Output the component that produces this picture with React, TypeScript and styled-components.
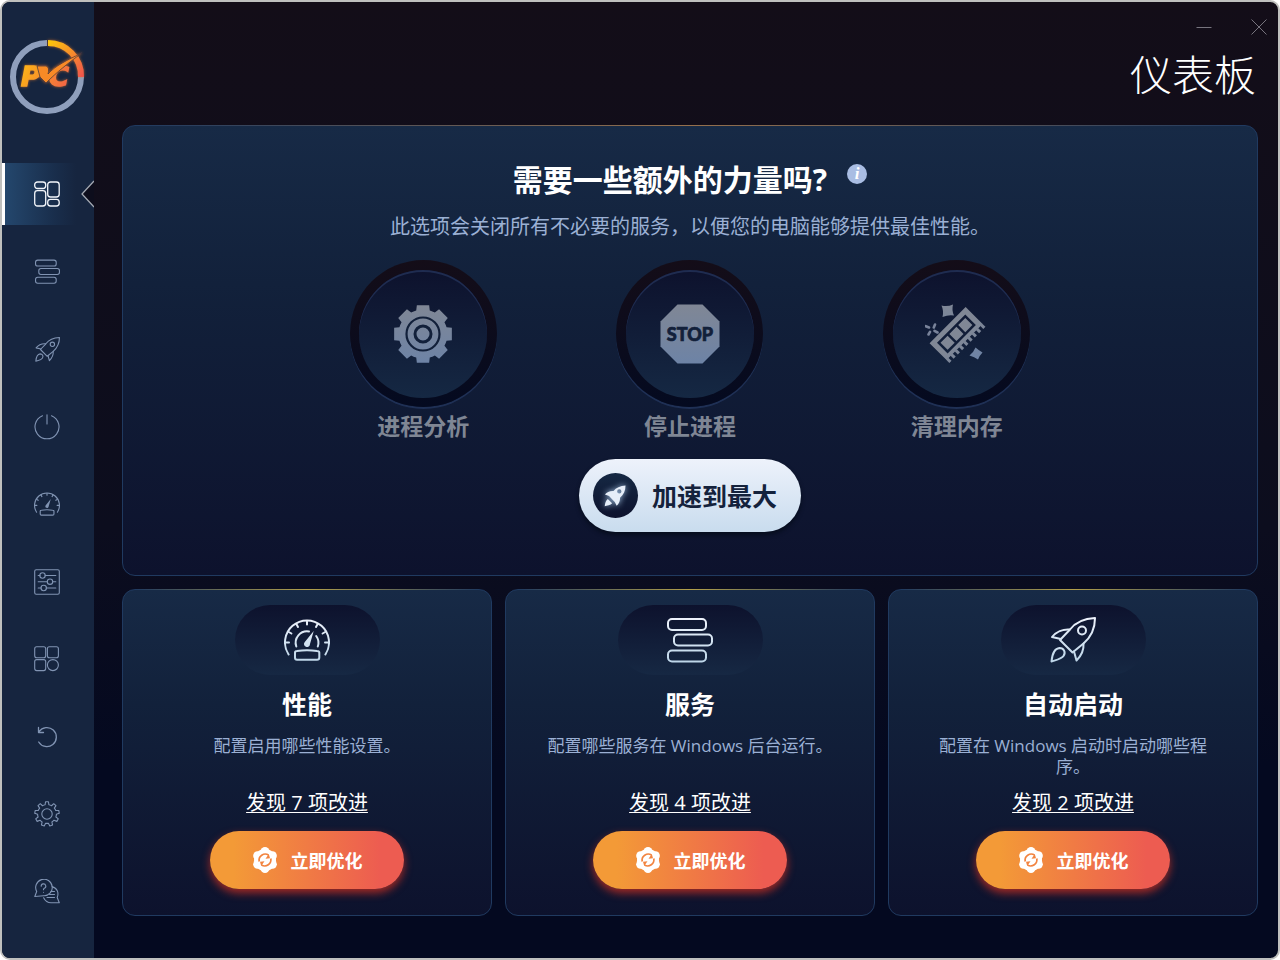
import React from "react";
import styled, { createGlobalStyle } from "styled-components";

const GlobalStyle = createGlobalStyle`
  *, *::before, *::after { box-sizing: border-box; }
  body {
    margin: 0;
    background: #ffffff;
    font-family: "Open Sans", "Noto Sans CJK SC", sans-serif;
    color: #ffffff;
  }
  button { font-family: inherit; cursor: pointer; }
  h1, h2, h3, p { margin: 0; }
`;

const Window = styled.div`
  display: flex;
  min-height: 100vh;
  border: 2px solid #bfc0be;
  border-radius: 10px;
  overflow: hidden;
  background: linear-gradient(#130d18, #0c0d1e 55%, #040920 80%, #040920);
`;

const Sidebar = styled.aside`
  display: flex;
  flex-direction: column;
  flex: 0 0 92px;
  background: #16253f;
`;

const LogoBox = styled.div`
  display: flex;
  justify-content: center;
  height: 161px;
  padding-top: 33px;
`;

const Nav = styled.nav`
  display: flex;
  flex: 1;
  flex-direction: column;
  justify-content: space-between;
  padding-bottom: 35px;
`;

const NavItem = styled.a<{ $active?: boolean }>`
  position: relative;
  display: flex;
  align-items: center;
  justify-content: center;
  height: 62px;
  padding-right: ${(p) => (p.$active ? "5px" : "2px")};
  color: ${(p) => (p.$active ? "#f2f6fb" : "#8194b3")};
  border-left: ${(p) => (p.$active ? "3px solid #ffffff" : "0")};
  background: ${(p) =>
    p.$active ? "linear-gradient(90deg, #24476d, #192e4c 55%, #16253f 80%)" : "none"};
`;

const ActiveArrow = styled.svg`
  position: absolute;
  top: 17px;
  right: 0;
`;

const Main = styled.main`
  flex: 1;
  min-width: 0;
  padding: 0 20px 42px 28px;
`;

const TitleBar = styled.div`
  display: flex;
  justify-content: flex-end;
  gap: 31px;
  height: 43px;
  padding-top: 13px;
  margin-right: -13px;
`;

const WindowButton = styled.button`
  display: flex;
  width: 24px;
  height: 24px;
  align-items: center;
  justify-content: center;
  padding: 0;
  border: 0;
  background: none;
  color: #77747e;
`;

const PageTitle = styled.h1`
  height: 80px;
  padding-right: 2px;
  font-size: 42px;
  font-weight: 300;
  line-height: 60px;
  text-align: right;
`;

const Panel = styled.section<{ $accent: string }>`
  position: relative;
  border: 1px solid #203a60;
  border-radius: 13px;
  background: linear-gradient(#172a46, #12213b 35%, #0d122d);
  &::before {
    content: "";
    position: absolute;
    top: -1px;
    left: 12px;
    right: 12px;
    height: 1px;
    background: linear-gradient(90deg, transparent, ${(p) => p.$accent} 50%, transparent);
  }
`;

const Hero = styled(Panel)`
  display: flex;
  flex-direction: column;
  align-items: center;
  padding: 34px 20px 43px;
`;

const HeroHeading = styled.div`
  display: flex;
  gap: 20px;
`;

const HeroTitle = styled.h2`
  font-size: 30px;
  font-weight: 700;
  line-height: 40px;
`;

const InfoButton = styled.button`
  width: 20px;
  height: 20px;
  margin-top: 4px;
  padding: 0;
  border: 0;
  border-radius: 50%;
  background: #a9bde3;
  color: #ffffff;
  font: italic 700 17px/20px "Liberation Serif", serif;
`;

const HeroText = styled.p`
  margin-top: 14px;
  font-size: 20px;
  line-height: 26px;
  color: #9bb0d4;
`;

const Steps = styled.ul`
  display: grid;
  grid-template-columns: repeat(3, 1fr);
  width: 100%;
  max-width: 800px;
  margin: 20px 0 18px;
  padding: 0;
  list-style: none;
`;

const Step = styled.li`
  display: flex;
  flex-direction: column;
  align-items: center;
  gap: 4px;
  font-size: 23px;
  font-weight: 700;
  line-height: 30px;
  color: #7f8694;
`;

const StepRing = styled.div`
  display: flex;
  align-items: center;
  justify-content: center;
  width: 147px;
  height: 147px;
  border-radius: 50%;
  background: linear-gradient(#140d18, #040a20);
  box-shadow: 0 2px 0 #1f3055;
`;

const StepDisc = styled.div`
  display: flex;
  align-items: center;
  justify-content: center;
  width: 128px;
  height: 128px;
  border-radius: 50%;
  background: linear-gradient(#0d122d, #152843);
  box-shadow: inset 0 2px 0 #1f2c50;
`;

const BoostButton = styled.button`
  display: flex;
  align-items: center;
  gap: 14px;
  height: 73px;
  padding: 0 24px 0 14px;
  border: 0;
  border-radius: 37px;
  background: linear-gradient(#edf2fb, #c9dcee);
  box-shadow: 0 3px 4px rgba(3, 10, 22, 0.7);
  color: #14223c;
  font-size: 25px;
  font-weight: 700;
  line-height: 36px;
`;

const BoostIcon = styled.span`
  display: flex;
  align-items: center;
  justify-content: center;
  width: 45px;
  height: 45px;
  border-radius: 50%;
  background: linear-gradient(#152843, #0d122d);
  svg { filter: drop-shadow(0 0 3px #a9c8e8); }
`;

const Cards = styled.div`
  display: grid;
  grid-template-columns: repeat(3, 1fr);
  gap: 13px;
  margin-top: 13px;
`;

const Card = styled(Panel)`
  display: flex;
  flex-direction: column;
  align-items: center;
  padding: 15px 37px 26px;
  text-align: center;
`;

const CardIcon = styled.div`
  display: flex;
  align-items: center;
  justify-content: center;
  width: 145px;
  height: 70px;
  border-radius: 35px;
  background: linear-gradient(#0d122d, #162843);
`;

const CardTitle = styled.h3`
  margin-top: 13px;
  font-size: 25px;
  font-weight: 700;
  line-height: 32px;
`;

const CardText = styled.p`
  min-height: 42px;
  margin-top: 15px;
  font-size: 17px;
  line-height: 21px;
  color: #9bb0d4;
`;

const FoundLink = styled.a`
  margin: 13px 0 15px;
  font-size: 20px;
  line-height: 26px;
  color: #ffffff;
  text-decoration: underline;
  text-decoration-thickness: 1px;
  text-underline-offset: 2px;
`;

const OptimizeButton = styled.button`
  display: flex;
  align-items: center;
  justify-content: center;
  gap: 13px;
  width: 194px;
  height: 58px;
  padding: 0;
  border: 0;
  border-radius: 29px;
  background: linear-gradient(90deg, #f39a37 12%, #ed5c51 88%);
  box-shadow: 0 4px 8px rgba(214, 50, 34, 0.75);
  color: #ffffff;
  font-size: 18px;
  font-weight: 700;
`;

/* Outline of a cog with flat teeth, centred in a square of side `size`. */
function gearPath(size: number, teeth: number, outer: number, inner: number, top: number, base: number) {
  const c = size / 2;
  const at = (r: number, a: number) =>
    `${(c + r * Math.sin(a)).toFixed(2)} ${(c - r * Math.cos(a)).toFixed(2)}`;
  const parts: string[] = [];
  for (let i = 0; i < teeth; i++) {
    const a = (i * 2 * Math.PI) / teeth;
    const next = ((i + 1) * 2 * Math.PI) / teeth;
    parts.push(
      `${i === 0 ? "M" : "L"}${at(inner, a - base)}L${at(outer, a - top)}L${at(outer, a + top)}L${at(inner, a + base)}`,
    );
    parts.push(`A${inner} ${inner} 0 0 1 ${at(inner, next - base)}`);
  }
  return parts.join("") + "Z";
}

type Glyph = { size: number; stroke?: string };

const line = (stroke: string, width: number) => ({
  fill: "none",
  stroke,
  strokeWidth: width,
  strokeLinecap: "round" as const,
  strokeLinejoin: "round" as const,
});

const StackIcon = ({ size, stroke = "currentColor" }: Glyph) => (
  <svg width={size} height={size} viewBox="0 0 46 46" {...line(stroke, 2)} aria-hidden="true">
    <rect x="1" y="2" width="38" height="11" rx="4" />
    <rect x="7" y="17.500" width="38" height="11" rx="4" />
    <rect x="1" y="33.500" width="38" height="11" rx="4" />
  </svg>
);

const RocketIcon = ({ size, stroke = "currentColor" }: Glyph) => (
  <svg width={size} height={size} viewBox="0 0 46 46" {...line(stroke, 2)} aria-hidden="true">
    <path d="M45 1C34 1.500 25 6 20 12.500L10 23L22.500 35.500L33.500 26.500C41 20 45 12 45 1Z" />
    <path d="M19.500 12.500C13 12 6 15 2 20L10.800 22" />
    <path d="M33.500 26.500C34 33 31 39 26.500 43.500L24 34.500" />
    <path d="M1.500 44.500C2 39 4 31.500 9.500 31C14 31 16 35.500 13.500 39C11.500 42 6 43 1.500 44.500Z" />
    <circle cx="32" cy="13.500" r="4" />
  </svg>
);

const ticks = [0, 30, 60, 90, 120, 150, 180];

const GaugeIcon = ({ size, stroke = "currentColor", detailed }: Glyph & { detailed?: boolean }) => (
  <svg width={size} height={size} viewBox="0 0 46 46" {...line(stroke, 2)} aria-hidden="true">
    <path d="M4.600 37.500A22 22 0 1 1 41.400 37.500" />
    {ticks.map((t) => {
      const a = (t * Math.PI) / 180;
      return (
        <path
          key={t}
          d={`M${23 - 21 * Math.cos(a)} ${25.5 - 21 * Math.sin(a)}L${23 - 18 * Math.cos(a)} ${25.5 - 18 * Math.sin(a)}`}
        />
      );
    })}
    {detailed && <path d="M12.300 29.500A11.500 11.500 0 0 1 25 14.400M32.200 19A11.500 11.500 0 0 1 33.800 29.500" />}
    <path
      d="M29.700 14L26 27A3 3 0 1 1 20.800 25Z"
      fill={stroke}
      stroke="none"
    />
    <path d="M11 35.500C11 34.500 12 34 13 34C19 33 27 33 33 34C34.500 34 35.300 34.500 35.300 35.500V40.500C35.300 42 34.500 42.700 33 42.700H13C11.500 42.700 11 42 11 40.500Z" />
  </svg>
);

const Small = ({ children }: { children: React.ReactNode }) => (
  <svg width="26" height="26" viewBox="0 0 26 26" {...line("currentColor", 1.1)} aria-hidden="true">
    {children}
  </svg>
);

const navItems: { label: string; icon: React.ReactNode }[] = [
  {
    label: "仪表板",
    icon: (
      <svg width="26" height="26" viewBox="0 0 26 26" {...line("currentColor", 1.3)} aria-hidden="true">
        <rect x="0.700" y="1" width="11" height="6.500" rx="2.800" />
        <rect x="13.700" y="1" width="11.500" height="15" rx="2.800" />
        <rect x="0.700" y="9.700" width="11" height="15.300" rx="2.800" />
        <rect x="13.700" y="18.300" width="11.500" height="6.700" rx="2.800" />
      </svg>
    ),
  },
  { label: "服务", icon: <StackIcon size={25} /> },
  { label: "自动启动", icon: <RocketIcon size={25} /> },
  {
    label: "电源",
    icon: (
      <Small>
        <path d="M8.500 1.700A12 12 0 1 0 17.500 1.700M13 0.700V10" />
      </Small>
    ),
  },
  { label: "性能", icon: <GaugeIcon size={26} /> },
  {
    label: "调整",
    icon: (
      <Small>
        <rect x="0.700" y="0.700" width="24.600" height="24.600" rx="1.500" />
        <path d="M4.200 6.500H6M11.200 6.500H21.800M4.200 12.700H13.300M18.800 12.700H21.800M4.200 19H7M12.400 19H21.800" />
        <circle cx="8.500" cy="6.500" r="2.700" />
        <circle cx="16" cy="12.700" r="2.700" />
        <circle cx="9.700" cy="19" r="2.700" />
      </Small>
    ),
  },
  {
    label: "应用",
    icon: (
      <Small>
        <rect x="0.700" y="0.700" width="11" height="11" rx="2" />
        <rect x="13.400" y="0.700" width="11" height="11" rx="2" />
        <rect x="0.700" y="13.600" width="11" height="11" rx="2" />
        <circle cx="18.900" cy="19.100" r="5.500" />
      </Small>
    ),
  },
  {
    label: "还原",
    icon: (
      <Small>
        <path d="M4.700 18A9.500 9.500 0 1 0 5 7.700M4.500 3.500V8.500H9.500" strokeWidth="1.300" />
      </Small>
    ),
  },
  {
    label: "设置",
    icon: (
      <Small>
        <path d={gearPath(26, 9, 12.3, 9.4, 0.12, 0.2)} />
        <circle cx="13" cy="13" r="5.200" />
      </Small>
    ),
  },
  {
    label: "帮助",
    icon: (
      <Small>
        <path d="M0.800 17.500L2.700 12.500A8.300 8.300 0 1 1 9.500 16.800Z" />
        <path d="M7.200 7.300A2.300 2.300 0 1 1 10.300 9.300C9.600 9.700 9.500 10.200 9.500 10.800M9.500 13.200V13.300" />
        <path d="M18 7.600C23.500 9 25 14 23.200 18.500L25.300 23.800H17C13.500 23.800 11 21.500 9.600 18.700" />
        <path d="M17 12.500H20.500M15.500 15.500H20.500M13 18.500H20.500" />
      </Small>
    ),
  },
];

const Logo = () => (
  <svg width="82" height="84" viewBox="0 0 82 84" role="img" aria-label="PC">
    <defs>
      <linearGradient id="logoArc" x1="0" y1="0" x2="1" y2="1">
        <stop offset="0" stopColor="#fdc50c" />
        <stop offset="1" stopColor="#f0564b" />
      </linearGradient>
      <linearGradient id="logoText" gradientUnits="userSpaceOnUse" x1="16" y1="30" x2="64" y2="56">
        <stop offset="0" stopColor="#fdb515" />
        <stop offset="1" stopColor="#f05a4d" />
      </linearGradient>
      <filter id="logoGlow" x="-30%" y="-30%" width="160%" height="160%">
        <feDropShadow dx="0" dy="0" stdDeviation="1.500" floodColor="#f07a2a" floodOpacity="0.700" />
      </filter>
    </defs>
    <circle cx="40" cy="42" r="34" fill="none" stroke="#8f9fbc" strokeWidth="6" />
    <path d="M40 8A34 34 0 0 1 74 42" fill="none" stroke="#16253f" strokeWidth="7" />
    <path d="M41 8A33 33 0 0 1 74 42" fill="none" stroke="url(#logoArc)" strokeWidth="6" filter="url(#logoGlow)" />
    <g filter="url(#logoGlow)">
      <text
        x="14 42"
        y="51"
        fontFamily="DejaVu Sans, sans-serif"
        fontSize="27"
        fontWeight="700"
        fontStyle="italic"
        fill="url(#logoText)"
        stroke="url(#logoText)"
        strokeWidth="1.500"
      >
        PC
      </text>
      <path d="M30 31H39C42 32 42 35 41 39C48 31 60 25 75 18C60 29 50 37 39 48L33 42Z" fill="#f88a26" stroke="#16253f" strokeWidth="0.600" />
    </g>
  </svg>
);

const StepGear = () => (
  <svg width="60" height="60" viewBox="0 0 60 60" aria-hidden="true">
    <path d={gearPath(60, 8, 29.5, 24.5, 0.21, 0.28)} fill="url(#mutedFill)" />
    <circle cx="30" cy="30" r="16.500" fill="none" stroke="#12203a" strokeWidth="2.200" />
    <circle cx="30" cy="30" r="8" fill="none" stroke="#12203a" strokeWidth="3" />
  </svg>
);

const StepStop = () => (
  <svg width="60" height="60" viewBox="0 0 60 60" aria-hidden="true">
    <path d="M17.500 0.500H42.500L59.500 17.500V42.500L42.500 59.500H17.500L0.500 42.500V17.500Z" fill="url(#mutedFill)" />
    <text
      x="30"
      y="37"
      textAnchor="middle"
      fontFamily="Lato, sans-serif"
      fontSize="18"
      fontWeight="900"
      fill="#12203a"
      stroke="#12203a"
      strokeWidth="0.700"
    >
      STOP
    </text>
  </svg>
);

const StepMemory = () => (
  <svg width="64" height="64" viewBox="0 0 64 64" aria-hidden="true">
    <g fill="url(#mutedFill)">
      <g transform="translate(32.5 33) rotate(-45)">
        <path
          fillRule="evenodd"
          d="M-25.500 -14H25.500V10H-25.500ZM-20 -9V6H20V-9Z"
        />
        <path d="M-17.500 -6.500H-7.500V3.500H-17.500ZM-5 -6.500H5V3.500H-5ZM7.500 -6.500H17.500V3.500H7.500Z" />
        {[-25.5, -19.5, -13.5, -7.5, -1.5, 4.5, 10.5, 16.5, 22.5].map((x) => (
          <rect key={x} x={x} y="9.500" width="3" height="4.500" />
        ))}
      </g>
      <path d="M16.500 3.500Q22.500 5 28 2.500Q26.500 8.500 29 13.500Q23.500 12.500 17.500 15Q19 9 16.500 3.500Z" />
      <path d="M50.500 45.500Q54 48.500 57.500 50.500Q54.500 53.500 53 57.500Q49.500 55 44.500 53.500Q48.500 50.500 50.500 45.500Z" />
    </g>
    <path
      d="M0.800 24.200L4 25.500M10 22.500L8.800 25.500M3.500 32.500L5 29.800M9.500 28.800L12.500 30.500"
      fill="none"
      stroke="#79839a"
      strokeWidth="2.600"
      strokeLinecap="round"
    />
  </svg>
);

const BoostRocket = () => (
  <svg width="22" height="22" viewBox="0 0 46 46" fill="#e6eef9" aria-hidden="true">
    <path
      fillRule="evenodd"
      d="M45 1C34 1.500 25 6 20 12.500C12 12 6 15 2 20L10.500 23L22.500 35.500L26.500 43.500C31 39 34 33 33.500 26.500C41 20 45 12 45 1ZM32 9A4.500 4.500 0 1 0 32 18A4.500 4.500 0 1 0 32 9Z"
    />
    <path d="M1.500 44.500C2 39 4 31.500 8 29.500L17 38C14 42 6 43 1.500 44.500Z" />
  </svg>
);

const petals = [0, 60, 120, 180, 240, 300];

const OptimizeIcon = () => (
  <svg width="26" height="26" viewBox="0 0 26 26" aria-hidden="true">
    <circle cx="13" cy="13" r="11" fill="#ffffff" />
    {petals.map((p) => {
      const a = (p * Math.PI) / 180;
      return <circle key={p} cx={13 + 8.6 * Math.sin(a)} cy={13 - 8.6 * Math.cos(a)} r="4.400" fill="#ffffff" />;
    })}
    <g fill="none" stroke="#f28440" strokeWidth="1.700">
      <path d="M7.200 14.500A6.200 6.200 0 0 1 16.500 8" />
      <path d="M18.800 11.500A6.200 6.200 0 0 1 9.500 18" />
    </g>
    <path d="M13.500 11.800L18 11.200L16.800 7ZM12.500 14.200L8 14.800L9.200 19Z" fill="#f28440" />
  </svg>
);

const SharedDefs = () => (
  <svg width="0" height="0" style={{ position: "absolute" }} aria-hidden="true">
    <defs>
      <linearGradient id="mutedFill" gradientUnits="userSpaceOnUse" x1="0" y1="0" x2="0" y2="60">
        <stop offset="0" stopColor="#808795" />
        <stop offset="1" stopColor="#6d83a6" />
      </linearGradient>
      <linearGradient id="paleStroke" gradientUnits="userSpaceOnUse" x1="0" y1="0" x2="0" y2="46">
        <stop offset="0" stopColor="#eff3fc" />
        <stop offset="1" stopColor="#bcd5e8" />
      </linearGradient>
    </defs>
  </svg>
);

const steps = [
  { label: "进程分析", icon: <StepGear /> },
  { label: "停止进程", icon: <StepStop /> },
  { label: "清理内存", icon: <StepMemory /> },
];

const cards = [
  {
    title: "性能",
    text: "配置启用哪些性能设置。",
    found: "发现 7 项改进",
    icon: <GaugeIcon size={46} stroke="url(#paleStroke)" detailed />,
  },
  {
    title: "服务",
    text: "配置哪些服务在 Windows 后台运行。",
    found: "发现 4 项改进",
    icon: <StackIcon size={46} stroke="url(#paleStroke)" />,
  },
  {
    title: "自动启动",
    text: "配置在 Windows 启动时启动哪些程序。",
    found: "发现 2 项改进",
    icon: <RocketIcon size={46} stroke="url(#paleStroke)" />,
  },
];

export default function App() {
  return (
    <>
      <GlobalStyle />
      <SharedDefs />
      <Window lang="zh-CN">
        <Sidebar>
          <LogoBox>
            <Logo />
          </LogoBox>
          <Nav>
            {navItems.map((item, i) => (
              <NavItem key={item.label} href="#" title={item.label} aria-label={item.label} $active={i === 0}>
                {item.icon}
                {i === 0 && (
                  <ActiveArrow width="13" height="28" viewBox="0 0 13 28" aria-hidden="true">
                    <path d="M13 1L1 14L13 27Z" fill="#0d0d1c" />
                    <path d="M13 1L1 14L13 27" fill="none" stroke="#a3a8b2" strokeWidth="1.300" />
                  </ActiveArrow>
                )}
              </NavItem>
            ))}
          </Nav>
        </Sidebar>
        <Main>
          <TitleBar>
            <WindowButton aria-label="最小化">
              <svg width="16" height="16" viewBox="0 0 16 16" stroke="currentColor" aria-hidden="true">
                <path d="M0.500 8.500H15.500" />
              </svg>
            </WindowButton>
            <WindowButton aria-label="关闭">
              <svg width="16" height="16" viewBox="0 0 16 16" stroke="currentColor" aria-hidden="true">
                <path d="M0.500 0.500L15.500 15.500M15.500 0.500L0.500 15.500" />
              </svg>
            </WindowButton>
          </TitleBar>
          <PageTitle>仪表板</PageTitle>
          <Hero $accent="#96704c">
            <HeroHeading>
              <HeroTitle>需要一些额外的力量吗?</HeroTitle>
              <InfoButton aria-label="信息">i</InfoButton>
            </HeroHeading>
            <HeroText>此选项会关闭所有不必要的服务，以便您的电脑能够提供最佳性能。</HeroText>
            <Steps>
              {steps.map((s) => (
                <Step key={s.label}>
                  <StepRing>
                    <StepDisc>{s.icon}</StepDisc>
                  </StepRing>
                  {s.label}
                </Step>
              ))}
            </Steps>
            <BoostButton>
              <BoostIcon>
                <BoostRocket />
              </BoostIcon>
              加速到最大
            </BoostButton>
          </Hero>
          <Cards>
            {cards.map((c) => (
              <Card key={c.title} $accent="#b3a04a">
                <CardIcon>{c.icon}</CardIcon>
                <CardTitle>{c.title}</CardTitle>
                <CardText>{c.text}</CardText>
                <FoundLink href="#">{c.found}</FoundLink>
                <OptimizeButton>
                  <OptimizeIcon />
                  立即优化
                </OptimizeButton>
              </Card>
            ))}
          </Cards>
        </Main>
      </Window>
    </>
  );
}
